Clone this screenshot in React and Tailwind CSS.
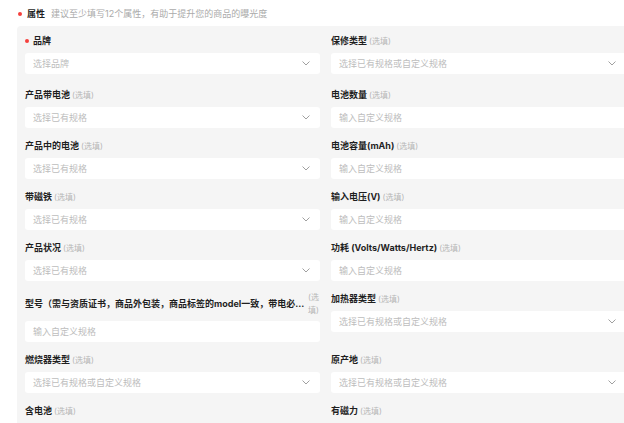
import React from "react";

const OPT = "(选填)";

function Chevron() {
  return (
    <svg width="8" height="5" viewBox="0 0 8 5" fill="none" className="shrink-0">
      <polyline points="0.8,0.8 4,4 7.2,0.8" stroke="#a0a0a0" strokeWidth="1" strokeLinecap="round" strokeLinejoin="round" />
    </svg>
  );
}

function Dot() {
  return <span className="inline-block w-[4px] h-[4px] rounded-full bg-[#f5403d] mr-[4px] shrink-0" />;
}

function Field({ label, required, placeholder, select, long, extra }) {
  return (
    <div className={extra ? "pb-[3px]" : ""}>
      {long ? (
        <div className="flex items-center h-[26px] mb-[4px]">
          <span className="flex-1 min-w-0 truncate font-bold text-[9px] text-[#1f1f1f]">{label}</span>
          <span className="w-[12px] ml-[3px] flex flex-col text-[8px] leading-[13px] text-[#b5b5b5] whitespace-nowrap">
            <span>(选</span>
            <span>填)</span>
          </span>
        </div>
      ) : (
        <div className="flex items-center h-[16px] mb-[4px]">
          {required && <Dot />}
          <span className="font-bold text-[9px] text-[#1f1f1f] whitespace-nowrap">{label}</span>
          {!required && <span className="ml-[2px] text-[8px] text-[#b5b5b5] whitespace-nowrap">{OPT}</span>}
        </div>
      )}
      <div className="h-[21px] bg-white rounded-[3px] flex items-center justify-between pl-[8px] pr-[10px]">
        <span className="text-[9px] text-[#bdbdbd] whitespace-nowrap">{placeholder}</span>
        {select && <Chevron />}
      </div>
    </div>
  );
}

const SEL_SPEC = "选择已有规格";
const SEL_ANY = "选择已有规格或自定义规格";
const INPUT = "输入自定义规格";

const rows = [
  [
    { label: "品牌", required: true, placeholder: "选择品牌", select: true },
    { label: "保修类型", placeholder: SEL_ANY, select: true },
  ],
  [
    { label: "产品带电池", placeholder: SEL_SPEC, select: true },
    { label: "电池数量", placeholder: INPUT },
  ],
  [
    { label: "产品中的电池", placeholder: SEL_SPEC, select: true },
    { label: "电池容量(mAh)", placeholder: INPUT },
  ],
  [
    { label: "带磁铁", placeholder: SEL_SPEC, select: true },
    { label: "输入电压(V)", placeholder: INPUT },
  ],
  [
    { label: "产品状况", placeholder: SEL_SPEC, select: true },
    { label: "功耗 (Volts/Watts/Hertz)", placeholder: INPUT },
  ],
  [
    {
      label: "型号（需与资质证书，商品外包装，商品标签的model一致，带电必须填写电池型号）",
      placeholder: INPUT,
      long: true,
    },
    { label: "加热器类型", placeholder: SEL_ANY, select: true },
  ],
  [
    { label: "燃烧器类型", placeholder: SEL_ANY, select: true },
    { label: "原产地", placeholder: SEL_ANY, select: true },
  ],
  [
    { label: "含电池", placeholder: SEL_SPEC, select: true },
    { label: "有磁力", placeholder: SEL_SPEC, select: true },
  ],
];

export default function App() {
  return (
    <div
      className="w-[624px] h-[423px] overflow-hidden bg-white"
      style={{ fontFamily: '"Inter", "Noto Sans CJK SC", sans-serif' }}
    >
      <div className="w-[660px] pl-[17px] pt-[7px]">
        <div className="flex items-center h-[14px]">
          <span className="inline-block w-[4px] h-[4px] rounded-full bg-[#f5403d] ml-[1px] mr-[5px]" />
          <span className="font-bold text-[9px] text-[#1f1f1f]">属性</span>
          <span className="ml-[6px] text-[9px] text-[#aaaaaa]">建议至少填写12个属性，有助于提升您的商品的曝光度</span>
        </div>
        <div className="mt-[5px] w-[617px] bg-[#f5f5f5] rounded-[4px] pt-[7px] px-[8px] pb-[12px]">
          <div className="grid grid-cols-[295px_295px] gap-x-[11px] gap-y-[10px]">
            {rows.map((pair, i) =>
              pair.map((f, j) => <Field key={`${i}-${j}`} {...f} extra={i === 0} />)
            )}
          </div>
        </div>
      </div>
    </div>
  );
}
